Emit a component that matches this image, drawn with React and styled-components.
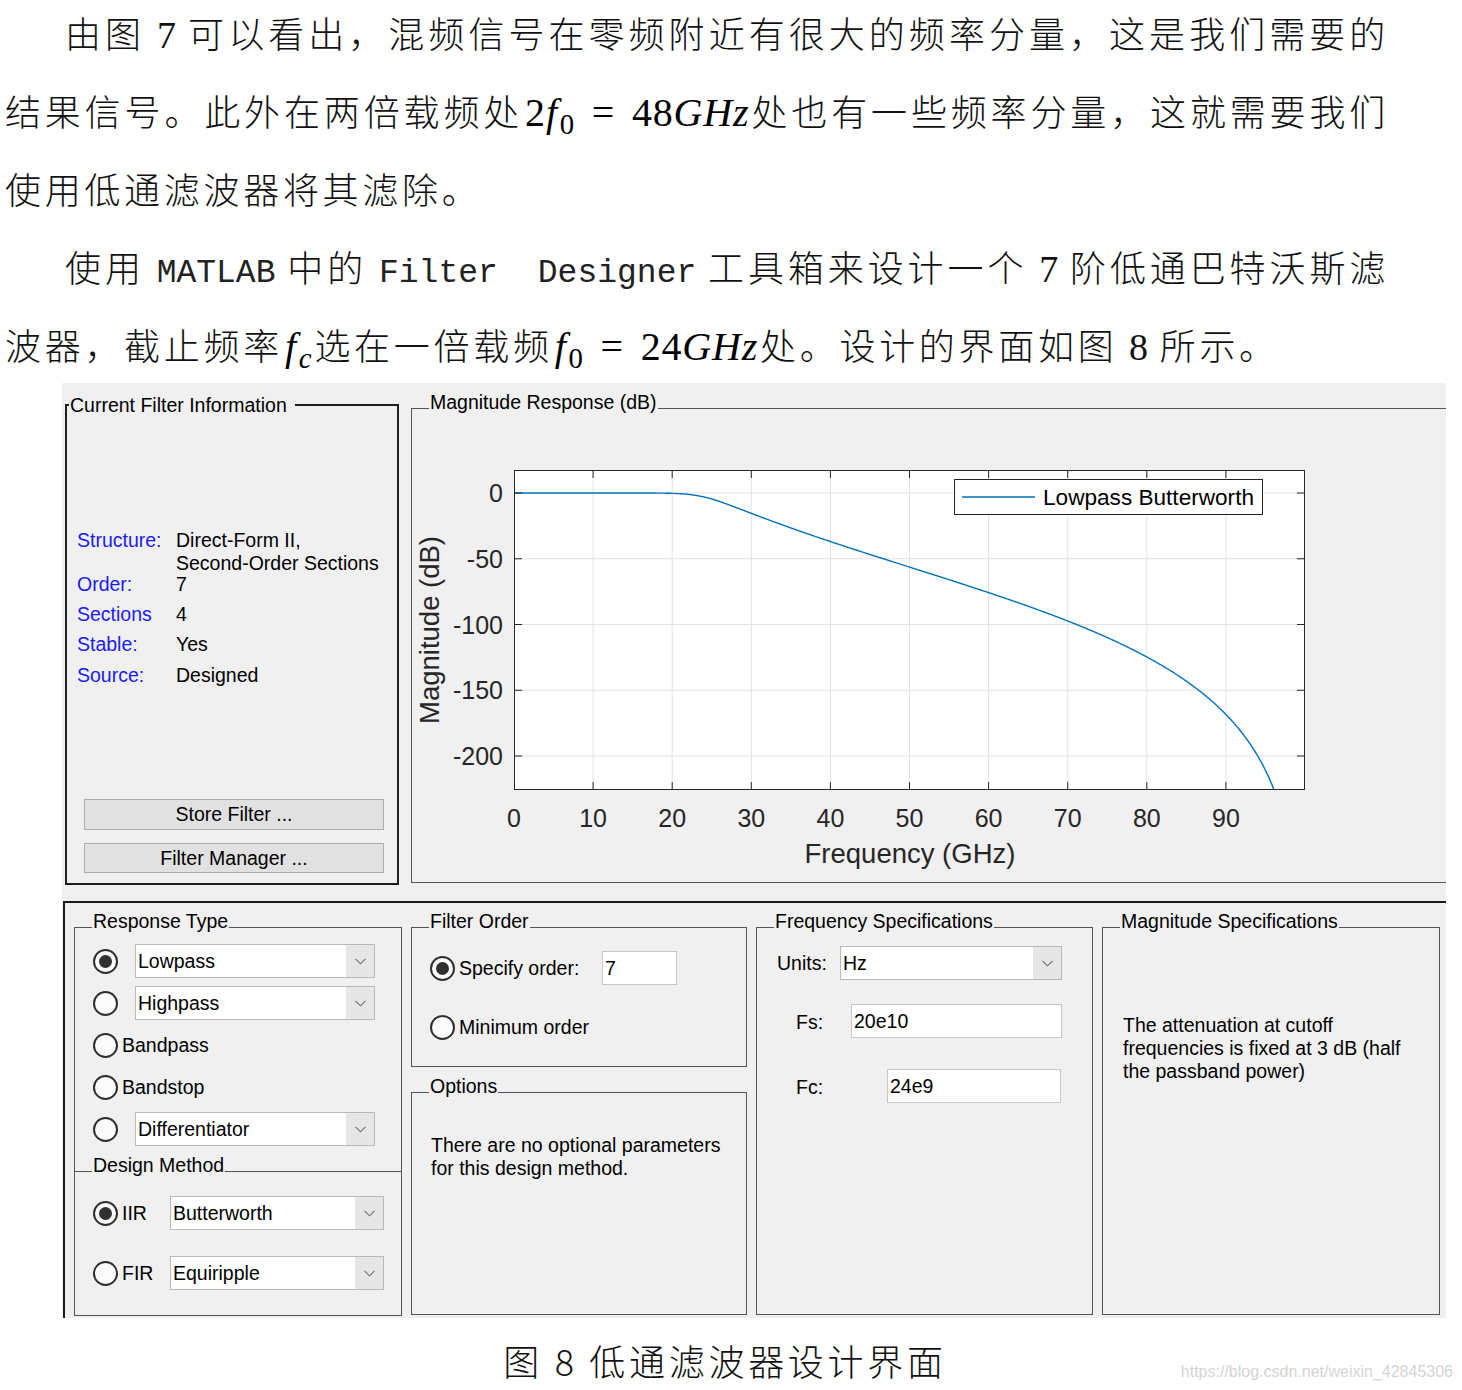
import React from "react";
import styled, { createGlobalStyle } from "styled-components";

const GlobalStyle = createGlobalStyle`
  html, body { margin: 0; padding: 0; background: #fff; }
  body { width: 1462px; height: 1390px; overflow: hidden; }
`;

/* ---------- document page ---------- */

const Page = styled.div`
  position: relative;
  width: 1462px;
  height: 1390px;
  overflow: hidden;
  background: #fff;
  color: #000;
`;

const Prose = styled.div`
  margin-top: -7px;
  padding-left: 5px;
  width: 1384px;
  font-family: "Noto Sans CJK SC", "Noto Sans CJK JP", sans-serif;
  font-weight: 300;
  font-size: 36px;
  line-height: 78px;
  letter-spacing: 3.7px;
  color: #111;
`;

const Line = styled.div`
  text-indent: ${(p) => (p.$indent ? "60px" : "0")};
  text-align: ${(p) => (p.$justify ? "justify" : "left")};
  text-align-last: ${(p) => (p.$justify ? "justify" : "auto")};
`;

const Num = styled.span`
  font-family: "Liberation Serif", serif;
  font-size: 38px;
  letter-spacing: 0;
  line-height: 1;
`;

const Mono = styled.span`
  font-family: "Liberation Mono", monospace;
  font-size: 33px;
  letter-spacing: 0;
  line-height: 1;
  white-space: pre;
  color: #222;
`;

const MathRun = styled.span`
  font-family: "Liberation Serif", serif;
  font-size: 40px;
  letter-spacing: 0.8px;
  line-height: 1;
  white-space: nowrap;
  color: #000;
  margin: 0 2px;
`;

const Var = styled.i`
  font-style: italic;
`;

const Sub = styled.span`
  margin-left: 2px;
  font-size: 0.72em;
  line-height: 0;
  vertical-align: -0.28em;
  font-style: ${(p) => (p.$italic ? "italic" : "normal")};
`;

const Eq = styled.span`
  margin: 0 0.42em;
`;

const FigCaption = styled.div`
  margin-top: 3px;
  padding-right: 12px;
  text-align: center;
  font-family: "Noto Sans CJK SC", "Noto Sans CJK JP", sans-serif;
  font-weight: 300;
  font-size: 36px;
  line-height: 78px;
  letter-spacing: 3.7px;
  color: #111;
`;

const Watermark = styled.div`
  position: absolute;
  right: 9px;
  top: 1362px;
  font-family: "Liberation Sans", Arial, sans-serif;
  font-size: 16px;
  line-height: 20px;
  color: #d4d4d4;
`;

/* ---------- filter designer window ---------- */

const Shot = styled.div`
  margin-left: 62px;
  width: 1384px;
  height: 935px;
  background: #f0f0f0;
  overflow: hidden;
  font-family: "Liberation Sans", Arial, sans-serif;
  font-size: 19.5px;
  color: #000;
`;

const TopRow = styled.div`
  display: flex;
  align-items: flex-start;
  gap: 12px;
  height: 518px;
  padding-left: 3px;
  box-sizing: border-box;
`;

const Group = styled.fieldset`
  box-sizing: border-box;
  flex: none;
  margin: ${(p) => p.$mt || 0}px 0 0 0;
  padding: 0;
  min-width: 0;
  width: ${(p) => p.$w}px;
  height: ${(p) => p.$h}px;
  border: ${(p) => (p.$heavy ? "2px solid #1e1e1e" : "1px solid #555")};
  ${(p) => (p.$open ? "border-bottom: none;" : "")}
`;

const Title = styled.legend`
  margin-left: ${(p) => (p.$inset ?? 17)}px;
  padding: 0 ${(p) => p.$tail ?? 1}px ${(p) => p.$drop ?? 12}px 1px;
  font-size: 19.5px;
  line-height: 22px;
  white-space: nowrap;
`;

const InfoBody = styled.div`
  display: flex;
  flex-direction: column;
  height: ${(p) => p.$h}px;
  box-sizing: border-box;
  padding: 113px 0 10px 0;
`;

const InfoRow = styled.div`
  display: grid;
  grid-template-columns: 99px 1fr;
  margin: ${(p) => p.$gap || 0}px 0 0 10px;
  line-height: 23px;
`;

const InfoKey = styled.span`
  color: #1c1cf2;
`;

const ButtonStack = styled.div`
  margin-top: auto;
  display: flex;
  flex-direction: column;
  gap: 13px;
  padding-left: 17px;
`;

const Button = styled.div`
  box-sizing: border-box;
  width: 300px;
  height: ${(p) => p.$h || 31}px;
  display: flex;
  align-items: center;
  justify-content: center;
  background: #e1e1e1;
  border: 1px solid #adadad;
`;

const PlotSvg = styled.svg`
  display: block;
  font-family: "Liberation Sans", Arial, sans-serif;
`;

const DesignArea = styled.div`
  margin-left: 1px;
  width: 1430px;
  height: 430px;
  box-sizing: border-box;
  border-top: 2px solid #1a1a1a;
  border-left: 2px solid #1a1a1a;
  padding: 7px 0 0 9px;
  display: flex;
  align-items: flex-start;
  gap: 9px;
`;

const Column = styled.div`
  display: flex;
  flex-direction: column;
  flex: none;
`;

const RadioList = styled.div`
  display: flex;
  flex-direction: column;
  gap: ${(p) => p.$gap ?? 8}px;
  margin-top: ${(p) => p.$mt || 0}px;
`;

const RadioRow = styled.div`
  display: flex;
  align-items: center;
  height: 34px;
  padding-left: 18px;
`;

const Radio = styled.span`
  flex: none;
  box-sizing: border-box;
  width: 25px;
  height: 25px;
  border-radius: 50%;
  border: 2px solid #2e2e2e;
  background: #fcfcfc;
  display: grid;
  place-items: center;
  &::after {
    content: "";
    width: 13px;
    height: 13px;
    border-radius: 50%;
    background: ${(p) => (p.$on ? "#303030" : "transparent")};
  }
`;

const RadioText = styled.span`
  flex: none;
  box-sizing: border-box;
  padding-left: 4px;
  width: ${(p) => (p.$w ? `${p.$w}px` : "auto")};
`;

const Select = styled.div`
  box-sizing: border-box;
  flex: none;
  display: flex;
  width: ${(p) => p.$w}px;
  height: 34px;
  margin-left: ${(p) => p.$ml || 0}px;
  background: #fff;
  border: 1px solid #b9b9b9;
`;

const SelectValue = styled.span`
  flex: 1;
  display: flex;
  align-items: center;
  padding-left: 2px;
`;

const SelectArrow = styled.span`
  width: 28px;
  background: #e6e6e6;
  display: grid;
  place-items: center;
`;

const TextBox = styled.div`
  box-sizing: border-box;
  flex: none;
  width: ${(p) => p.$w}px;
  height: 34px;
  display: flex;
  align-items: center;
  padding-left: 2px;
  background: #fff;
  border: 1px solid #c6c6c6;
`;

const FieldRow = styled.div`
  display: flex;
  align-items: center;
  height: 34px;
  margin-top: ${(p) => p.$mt || 0}px;
  padding-left: ${(p) => p.$pl}px;
`;

const FieldLabel = styled.span`
  flex: none;
  width: ${(p) => p.$w}px;
  padding-top: ${(p) => p.$drop || 0}px;
`;

const Note = styled.div`
  margin-top: ${(p) => p.$mt}px;
  padding-left: ${(p) => p.$pl}px;
  line-height: 23px;
`;

/* ---------- pieces ---------- */

const Chevron = () => (
  <svg width="11" height="7" viewBox="0 0 11 7">
    <polyline points="0.5,0.8 5.5,5.8 10.5,0.8" fill="none" stroke="#6f6f6f" strokeWidth="1.1" />
  </svg>
);

const Dropdown = ({ w, ml, children }) => (
  <Select $w={w} $ml={ml}>
    <SelectValue>{children}</SelectValue>
    <SelectArrow>
      <Chevron />
    </SelectArrow>
  </Select>
);

const PLOT = { w: 1040, h: 462, x0: 102, x1: 893, y0: 45, y1: 365 };
const fx = (f) => PLOT.x0 + (f / 100) * (PLOT.x1 - PLOT.x0);
const dy = (db) => 68 - db * 1.315;

function responsePath() {
  // 7th-order digital Butterworth, fc = 24 GHz, Fs = 200 GHz
  const tc = Math.tan((Math.PI * 24) / 200);
  const pts = [];
  for (let i = 0; i <= 2000; i++) {
    const f = i * 0.05;
    const r = Math.tan((Math.PI * f) / 200) / tc;
    const db = -10 * Math.log10(1 + Math.pow(r, 14));
    const y = dy(db);
    pts.push(`${fx(f).toFixed(2)},${Math.min(y, PLOT.y1 + 30).toFixed(2)}`);
    if (y > PLOT.y1 + 30) break;
  }
  return "M" + pts.join(" L");
}

function ResponsePlot() {
  const { w, h, x0, x1, y0, y1 } = PLOT;
  const xTicks = [0, 10, 20, 30, 40, 50, 60, 70, 80, 90];
  const yTicks = [0, -50, -100, -150, -200];
  const ink = "#262626";
  return (
    <PlotSvg width={w} height={h} viewBox={`0 0 ${w} ${h}`}>
      <defs>
        <clipPath id="axes-clip">
          <rect x={x0} y={y0} width={x1 - x0} height={y1 - y0} />
        </clipPath>
      </defs>
      <rect x={x0} y={y0} width={x1 - x0} height={y1 - y0} fill="#fff" />
      {xTicks.slice(1).map((t) => (
        <line key={`gx${t}`} x1={fx(t)} x2={fx(t)} y1={y0} y2={y1} stroke="#e3e3e3" strokeWidth="1" />
      ))}
      {yTicks.map((t) => (
        <line key={`gy${t}`} x1={x0} x2={x1} y1={dy(t)} y2={dy(t)} stroke="#e3e3e3" strokeWidth="1" />
      ))}
      <path d={responsePath()} fill="none" stroke="#0072bd" strokeWidth="1.4" clipPath="url(#axes-clip)" />
      <rect x={542.5} y={54.5} width={308} height={35} fill="#fff" stroke={ink} strokeWidth="1" />
      <line x1={550} x2={623} y1={72} y2={72} stroke="#0072bd" strokeWidth="1.4" />
      <text x={631} y={80} fontSize="22.6" fill="#000">
        Lowpass Butterworth
      </text>
      <rect x={x0 + 0.5} y={y0 + 0.5} width={x1 - x0 - 1} height={y1 - y0 - 1} fill="none" stroke={ink} strokeWidth="1" />
      {xTicks.slice(1).map((t) => (
        <g key={`tx${t}`} stroke={ink} strokeWidth="1">
          <line x1={fx(t)} x2={fx(t)} y1={y0} y2={y0 + 8} />
          <line x1={fx(t)} x2={fx(t)} y1={y1} y2={y1 - 8} />
        </g>
      ))}
      {yTicks.map((t) => (
        <g key={`ty${t}`} stroke={ink} strokeWidth="1">
          <line x1={x0} x2={x0 + 8} y1={dy(t)} y2={dy(t)} />
          <line x1={x1} x2={x1 - 8} y1={dy(t)} y2={dy(t)} />
        </g>
      ))}
      {yTicks.map((t) => (
        <text key={`ly${t}`} x={91} y={dy(t) + 9} fontSize="25" fill={ink} textAnchor="end">
          {t}
        </text>
      ))}
      {xTicks.map((t) => (
        <text key={`lx${t}`} x={fx(t)} y={402} fontSize="25" fill={ink} textAnchor="middle">
          {t}
        </text>
      ))}
      <text x={498} y={438} fontSize="27.5" fill={ink} textAnchor="middle">
        Frequency (GHz)
      </text>
      <text transform="translate(27,205) rotate(-90)" fontSize="27.5" fill={ink} textAnchor="middle">
        Magnitude (dB)
      </text>
    </PlotSvg>
  );
}

export default function App() {
  return (
    <>
      <GlobalStyle />
      <Page>
        <Prose>
          <Line $indent $justify>
            由图 <Num>7</Num> 可以看出，混频信号在零频附近有很大的频率分量，这是我们需要的
          </Line>
          <Line $justify>
            结果信号。此外在两倍载频处
            <MathRun>
              2<Var>f</Var>
              <Sub>0</Sub>
              <Eq>=</Eq>48<Var>GHz</Var>
            </MathRun>
            处也有一些频率分量，这就需要我们
          </Line>
          <Line>使用低通滤波器将其滤除。</Line>
          <Line $indent $justify>
            使用 <Mono>MATLAB</Mono> 中的 <Mono>{"Filter  Designer"}</Mono> 工具箱来设计一个 <Num>7</Num> 阶低通巴特沃斯滤
          </Line>
          <Line>
            波器，截止频率
            <MathRun>
              <Var>f</Var>
              <Sub $italic>c</Sub>
            </MathRun>
            选在一倍载频
            <MathRun>
              <Var>f</Var>
              <Sub>0</Sub>
              <Eq>=</Eq>24<Var>GHz</Var>
            </MathRun>
            处。设计的界面如图 <Num>8</Num> 所示。
          </Line>
        </Prose>

        <Shot>
          <TopRow>
            <Group $heavy $w={334} $h={491} $mt={11}>
              <Title $inset={2} $tail={8} $drop={0}>
                Current Filter Information
              </Title>
              <InfoBody $h={467}>
                <InfoRow>
                  <InfoKey>Structure:</InfoKey>
                  <span>
                    Direct-Form II,
                    <br />
                    Second-Order Sections
                  </span>
                </InfoRow>
                <InfoRow $gap={-2}>
                  <InfoKey>Order:</InfoKey>
                  <span>7</span>
                </InfoRow>
                <InfoRow $gap={7}>
                  <InfoKey>Sections</InfoKey>
                  <span>4</span>
                </InfoRow>
                <InfoRow $gap={7}>
                  <InfoKey>Stable:</InfoKey>
                  <span>Yes</span>
                </InfoRow>
                <InfoRow $gap={8}>
                  <InfoKey>Source:</InfoKey>
                  <span>Designed</span>
                </InfoRow>
                <ButtonStack>
                  <Button>Store Filter ...</Button>
                  <Button $h={30}>Filter Manager ...</Button>
                </ButtonStack>
              </InfoBody>
            </Group>

            <Group $w={1100} $h={492} $mt={8}>
              <Title>Magnitude Response (dB)</Title>
              <ResponsePlot />
            </Group>
          </TopRow>

          <DesignArea>
            <Column>
              <Group $w={328} $h={261} $open>
                <Title>Response Type</Title>
                <RadioList>
                  <RadioRow>
                    <Radio $on />
                    <Dropdown w={240} ml={17}>Lowpass</Dropdown>
                  </RadioRow>
                  <RadioRow>
                    <Radio />
                    <Dropdown w={240} ml={17}>Highpass</Dropdown>
                  </RadioRow>
                  <RadioRow>
                    <Radio />
                    <RadioText>Bandpass</RadioText>
                  </RadioRow>
                  <RadioRow>
                    <Radio />
                    <RadioText>Bandstop</RadioText>
                  </RadioRow>
                  <RadioRow>
                    <Radio />
                    <Dropdown w={240} ml={17}>Differentiator</Dropdown>
                  </RadioRow>
                </RadioList>
              </Group>
              <Group $w={328} $h={162} $mt={-17}>
                <Title>Design Method</Title>
                <RadioList $mt={8} $gap={26}>
                  <RadioRow>
                    <Radio $on />
                    <RadioText $w={52}>IIR</RadioText>
                    <Dropdown w={214}>Butterworth</Dropdown>
                  </RadioRow>
                  <RadioRow>
                    <Radio />
                    <RadioText $w={52}>FIR</RadioText>
                    <Dropdown w={214}>Equiripple</Dropdown>
                  </RadioRow>
                </RadioList>
              </Group>
            </Column>

            <Column>
              <Group $w={336} $h={157}>
                <Title>Filter Order</Title>
                <RadioList $mt={7} $gap={25}>
                  <RadioRow>
                    <Radio $on />
                    <RadioText $w={147}>Specify order:</RadioText>
                    <TextBox $w={75}>7</TextBox>
                  </RadioRow>
                  <RadioRow>
                    <Radio />
                    <RadioText>Minimum order</RadioText>
                  </RadioRow>
                </RadioList>
              </Group>
              <Group $w={336} $h={240} $mt={8}>
                <Title>Options</Title>
                <Note $mt={25} $pl={19}>
                  There are no optional parameters
                  <br />
                  for this design method.
                </Note>
              </Group>
            </Column>

            <Group $w={337} $h={405}>
              <Title>Frequency Specifications</Title>
              <FieldRow $pl={20} $mt={2}>
                <FieldLabel $w={63}>Units:</FieldLabel>
                <Dropdown w={222}>Hz</Dropdown>
              </FieldRow>
              <FieldRow $pl={39} $mt={24}>
                <FieldLabel $w={55} $drop={3}>
                  Fs:
                </FieldLabel>
                <TextBox $w={211}>20e10</TextBox>
              </FieldRow>
              <FieldRow $pl={39} $mt={31}>
                <FieldLabel $w={91} $drop={3}>
                  Fc:
                </FieldLabel>
                <TextBox $w={174}>24e9</TextBox>
              </FieldRow>
            </Group>

            <Group $w={338} $h={405}>
              <Title>Magnitude Specifications</Title>
              <Note $mt={70} $pl={20}>
                The attenuation at cutoff
                <br />
                frequencies is fixed at 3 dB (half
                <br />
                the passband power)
              </Note>
            </Group>
          </DesignArea>
        </Shot>

        <FigCaption>图 8 低通滤波器设计界面</FigCaption>
        <Watermark>https://blog.csdn.net/weixin_42845306</Watermark>
      </Page>
    </>
  );
}
